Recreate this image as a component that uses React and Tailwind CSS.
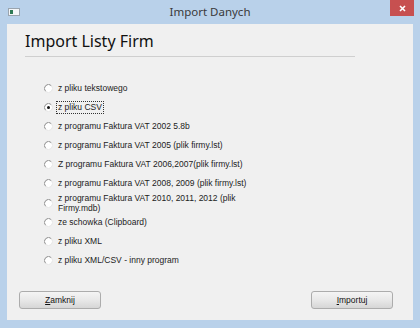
import React, { useState } from "react";

const options = [
    { id: "txt", label: "z pliku tekstowego" },
    { id: "csv", label: "z pliku CSV" },
    { id: "fv2002", label: "z programu Faktura VAT 2002 5.8b" },
    { id: "fv2005", label: "z programu Faktura VAT 2005 (plik firmy.lst)" },
    { id: "fv2006", label: "Z programu Faktura VAT 2006,2007(plik firmy.lst)" },
    { id: "fv2008", label: "z programu Faktura VAT 2008, 2009 (plik firmy.lst)" },
    { id: "fv2010", label: "z programu Faktura VAT 2010, 2011, 2012 (plik", label2: "Firmy.mdb)" },
    { id: "clip", label: "ze schowka (Clipboard)" },
    { id: "xml", label: "z pliku XML" },
    { id: "other", label: "z pliku XML/CSV - inny program" },
];

const Radio = ({ checked }) => (
    <svg width="9" height="9" viewBox="0 0 12 12" className="shrink-0">
        <circle cx="6" cy="6" r="5.3" fill="#ffffff" />
        <path d="M 2.2 9.8 A 5.3 5.3 0 0 1 9.8 2.2" fill="none" stroke="#8a8a8a" strokeWidth="1.3" />
        <path d="M 9.8 2.2 A 5.3 5.3 0 0 1 2.2 9.8" fill="none" stroke="#e4e4e4" strokeWidth="1.3" />
        {checked && <circle cx="6" cy="6" r="2" fill="#111111" />}
    </svg>
);

const WinButton = ({ first, rest }) => (
    <button
        type="button"
        className="w-[82px] h-[18px] rounded-[3px] border border-[#acacac] bg-gradient-to-b from-[#f4f4f4] via-[#e8e8e8] to-[#d6d6d6] text-[8.5px] text-[#111] flex items-center justify-center"
    >
        <span><span className="underline">{first}</span>{rest}</span>
    </button>
);

export default function App() {
    const [selected, setSelected] = useState("csv");

    return (
        <div
            className="w-[420px] h-[328px] bg-[#b9d1ea] flex flex-col overflow-hidden"
            style={{ fontFamily: '"Liberation Sans", Arial, sans-serif' }}
        >
            {/* title bar */}
            <div className="relative h-[24px] flex items-center justify-center shrink-0">
                <svg width="12" height="8" viewBox="0 0 12 8" className="absolute left-[8px] top-[8px]">
                    <rect x="0.5" y="0.5" width="11" height="7" fill="#f4f6f8" stroke="#9aa4ae" />
                    <rect x="2" y="2" width="3" height="4" fill="#2f7a55" />
                </svg>
                <span
                    className="text-[11.5px] text-[#3a3a3a] -mt-[1px]"
                    style={{ fontFamily: '"Noto Sans", "Open Sans", sans-serif' }}
                >
                    Import Danych
                </span>
                <div className="absolute right-[6px] top-0 w-[24px] h-[16px] bg-[#c75050] flex items-center justify-center">
                    <svg width="7" height="7" viewBox="0 0 7 7">
                        <path d="M1 1 L6 6 M6 1 L1 6" stroke="#ffffff" strokeWidth="1.6" />
                    </svg>
                </div>
            </div>

            {/* content */}
            <div className="mx-[7px] mb-[8px] flex-1 bg-[#f0f0f0] flex flex-col">
                <div className="pl-[18px] pr-[58px] pt-[6px]">
                    <h1
                        className="text-[16px] leading-[22px] text-[#111]"
                        style={{ fontFamily: '"Noto Sans", "Open Sans", sans-serif' }}
                    >
                        Import Listy Firm
                    </h1>
                    <div className="mt-[4px] h-px bg-[#cfcfcf]" />
                </div>

                <div className="mt-[22px] pl-[37px] flex flex-col text-[8.5px] text-[#222]">
                    {options.map((o) => (
                        <label
                            key={o.id}
                            onClick={() => setSelected(o.id)}
                            className={`flex items-center gap-[3px] ${o.label2 ? "h-[20px]" : "h-[19px]"}`}
                        >
                            <Radio checked={selected === o.id} />
                            {o.label2 ? (
                                <span className="leading-[10px] px-[1px] border border-transparent">
                                    {o.label}
                                    <br />
                                    {o.label2}
                                </span>
                            ) : (
                                <span
                                    className={`leading-[11px] px-[1px] border ${
                                        selected === o.id ? "border-dotted border-[#333]" : "border-transparent"
                                    }`}
                                >
                                    {o.label}
                                </span>
                            )}
                        </label>
                    ))}
                </div>

                <div className="flex-1" />

                <div className="flex justify-between pl-[12px] pr-[20px] pb-[11px]">
                    <WinButton first="Z" rest="amknij" />
                    <WinButton first="I" rest="mportuj" />
                </div>
            </div>
        </div>
    );
}
